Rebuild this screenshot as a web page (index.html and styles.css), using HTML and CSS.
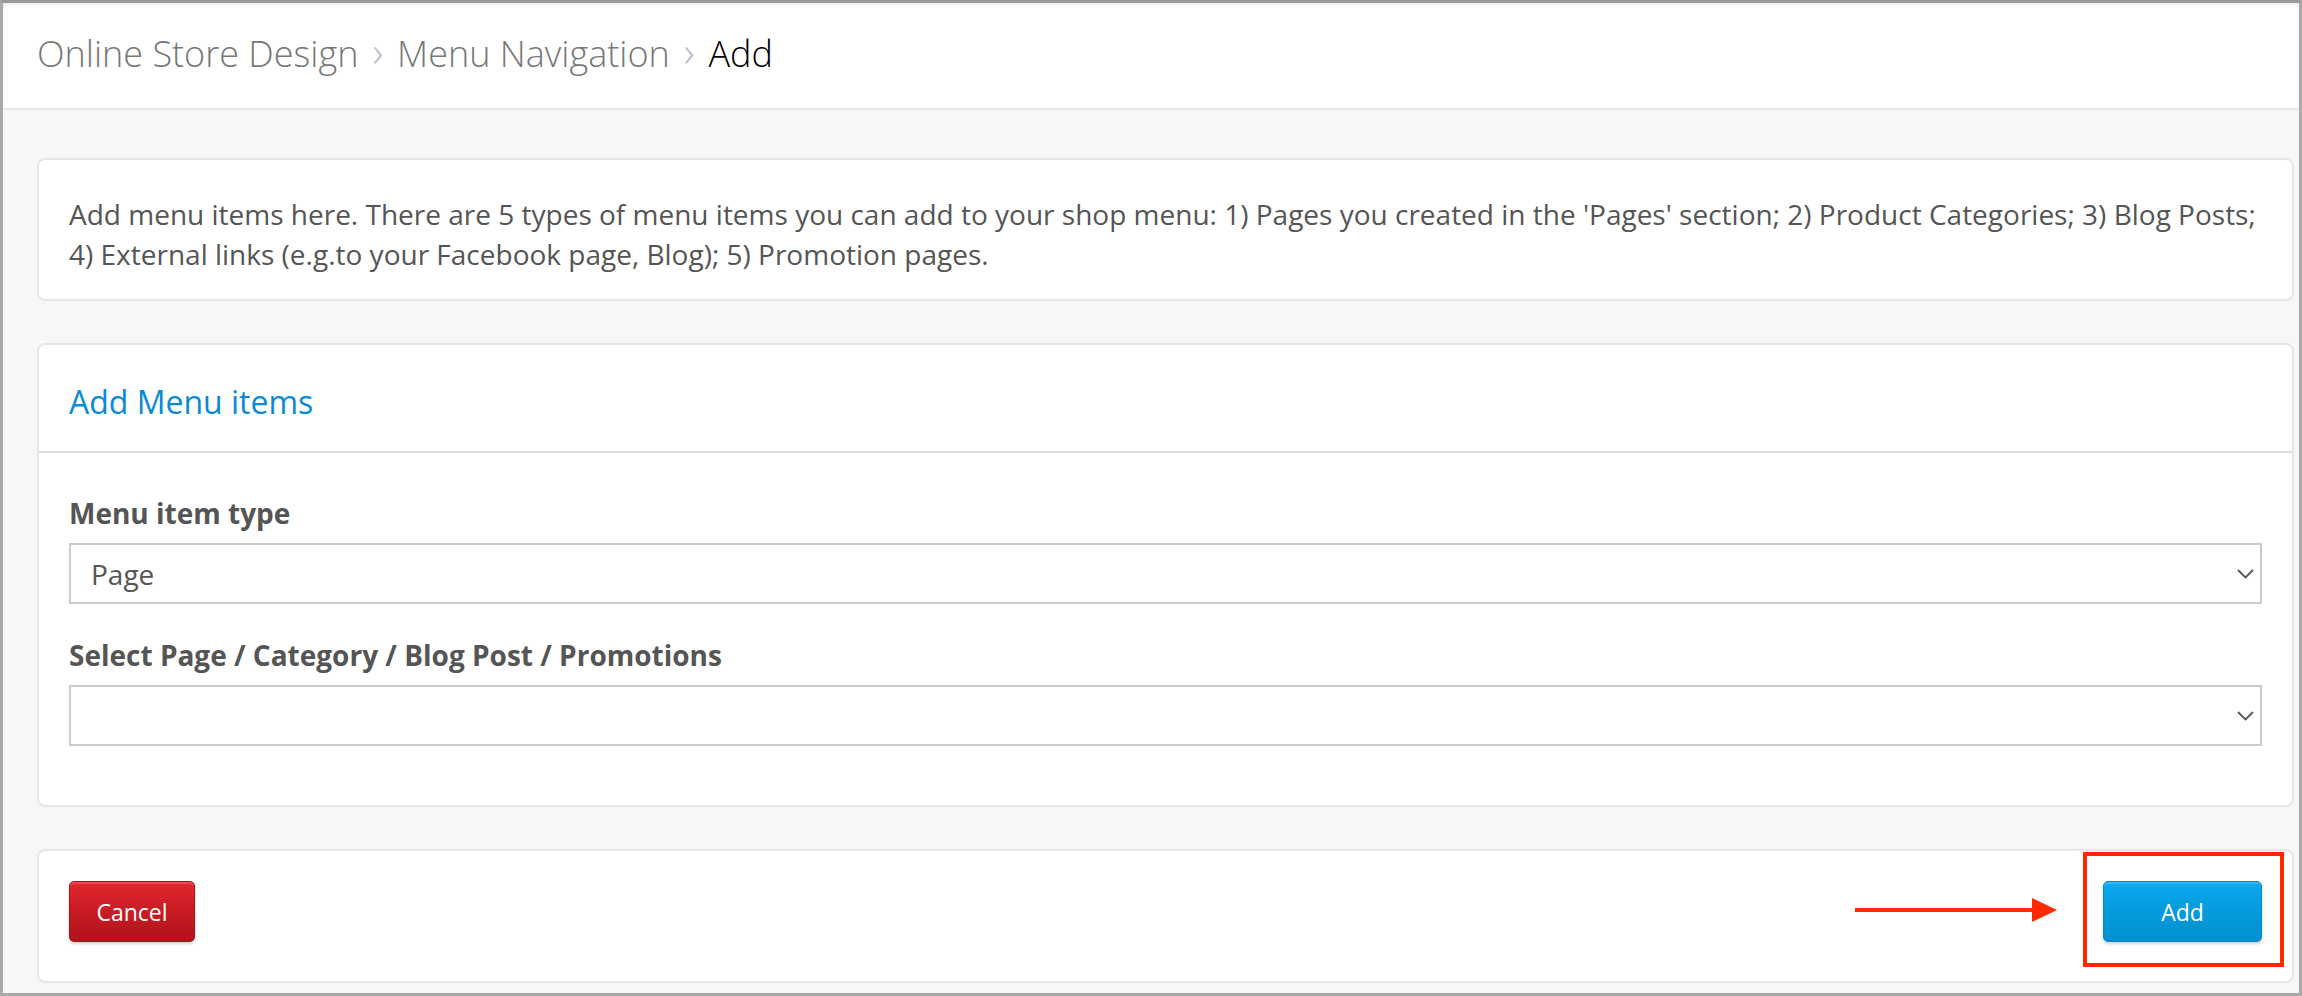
FILE: index.html
```html
<!DOCTYPE html>
<html>
<head>
    <meta charset="utf-8">
    <meta name="viewport" content="width=device-width, initial-scale=1">
    <title>Menu Navigation - Add</title>
    <link rel="stylesheet" href="styles.css">
</head>
<body>
    <div class="window">
        <header class="topbar">
            <nav class="crumbs">
                <span class="crumb">Online Store Design</span>
                <span class="sep">&rsaquo;</span>
                <span class="crumb">Menu Navigation</span>
                <span class="sep">&rsaquo;</span>
                <span class="crumb current">Add</span>
            </nav>
        </header>

        <main class="content">
            <section class="card intro">
                <p>Add menu items here. There are 5 types of menu items you can add to your shop menu: 1) Pages you created in the 'Pages' section; 2) Product Categories; 3) Blog Posts; 4) External links (e.g.to your Facebook page, Blog); 5) Promotion pages.</p>
            </section>

            <section class="card">
                <div class="card-head">
                    <h2>Add Menu items</h2>
                </div>
                <div class="card-body">
                    <div class="field">
                        <label for="item-type">Menu item type</label>
                        <div class="select-wrap">
                            <select id="item-type">
                                <option>Page</option>
                            </select>
                            <svg class="caret" width="17" height="10" viewBox="0 0 17 10"><polyline points="1,1 8.5,8.5 16,1" /></svg>
                        </div>
                    </div>
                    <div class="field">
                        <label for="item-target">Select Page / Category / Blog Post / Promotions</label>
                        <div class="select-wrap">
                            <select id="item-target">
                                <option></option>
                            </select>
                            <svg class="caret" width="17" height="10" viewBox="0 0 17 10"><polyline points="1,1 8.5,8.5 16,1" /></svg>
                        </div>
                    </div>
                </div>
            </section>

            <section class="card actions">
                <button class="btn btn-cancel">Cancel</button>
                <button class="btn btn-add">Add</button>
                <!-- annotation -->
                <svg class="arrow" width="202" height="24" viewBox="0 0 202 24">
                    <rect x="0" y="10" width="180" height="4" />
                    <polygon points="177,0 202,12 177,24" />
                </svg>
                <div class="callout"></div>
            </section>
        </main>
    </div>
</body>
</html>
```

FILE: styles.css
```css
body {
    margin: 0;
    font-family: "Open Sans", "Liberation Sans", sans-serif;
    background-color: #ffffff;
}

.window {
    box-sizing: border-box;
    width: 2302px;
    height: 996px;
    border: 3px solid #a9a9a9;
    border-top-color: #9a9a9a;
    background-color: #f7f7f7;
    overflow: hidden;
}

.topbar {
    box-sizing: border-box;
    height: 107px;
    background-color: white;
    border-bottom: 2px solid #e6e6e6;
    box-shadow: inset 0 3px 4px -2px rgba(0, 0, 0, 0.12);
    display: flex;
    align-items: center;
    padding: 0 34px 5px;
}

.crumbs {
    font-size: 36px;
    font-weight: 300;
    color: #777;
    display: flex;
    align-items: center;
}

.crumbs .sep {
    color: #b4bccb;
    margin: 0 14px;
    font-size: 42px;
    line-height: 36px;
    padding-bottom: 4px;
}

.crumbs .current {
    color: #000;
}

.content {
    padding: 48px 5px 0 34px;
    display: flex;
    flex-direction: column;
    gap: 42px;
}

.card {
    background-color: white;
    border: 2px solid #e6e6e6;
    border-radius: 8px;
}

.intro {
    padding: 34px 30px 25px;
}

.intro p {
    margin: 0;
    font-size: 28px;
    line-height: 40px;
    color: #555;
}

.card-head {
    padding: 35px 30px 27px;
    border-bottom: 2px solid #dedede;
}

.card-head h2 {
    margin: 0;
    font-size: 32px;
    line-height: 44px;
    font-weight: 400;
    color: #0a8ad4;
}

.card-body {
    padding: 40px 30px 28px;
}

.field {
    margin-bottom: 31px;
}

.field label {
    display: block;
    font-size: 28px;
    line-height: 40px;
    font-weight: 700;
    color: #555;
    margin-bottom: 10px;
}

.select-wrap {
    position: relative;
}

.select-wrap select {
    -webkit-appearance: none;
    appearance: none;
    box-sizing: border-box;
    display: block;
    width: 100%;
    height: 61px;
    border: 2px solid #cbcbcb;
    border-radius: 0;
    background-color: white;
    padding: 0 40px 0 20px;
    font-family: "Open Sans", "Liberation Sans", sans-serif;
    font-size: 28px;
    color: #555;
}

.caret {
    position: absolute;
    right: 8px;
    top: 26px;
    pointer-events: none;
}

.caret polyline {
    fill: none;
    stroke: #555;
    stroke-width: 1.8;
}

.actions {
    position: relative;
    padding: 30px 30px 39px;
    display: flex;
    justify-content: space-between;
    align-items: flex-start;
}

.btn {
    box-sizing: border-box;
    height: 61px;
    padding: 0 26px;
    border-radius: 5px;
    font-family: "Open Sans", "Liberation Sans", sans-serif;
    font-size: 23px;
    color: white;
    box-shadow: 0 2px 3px rgba(0, 0, 0, 0.18);
}

.btn-cancel {
    width: 126px;
    border: 1px solid #a5121a;
    background: linear-gradient(#e4272f, #c81c24 50%, #b0131c);
    box-shadow: inset 0 2px 0 rgba(255, 255, 255, 0.18), 0 2px 3px rgba(0, 0, 0, 0.18);
}

.btn-add {
    width: 159px;
    border: 1px solid #0a84c2;
    background: linear-gradient(#0ba9ef, #049bdd 50%, #0090cf);
    box-shadow: inset 0 2px 0 rgba(255, 255, 255, 0.18), 0 2px 3px rgba(0, 0, 0, 0.18);
}

.callout {
    position: absolute;
    right: 8px;
    top: 1px;
    box-sizing: border-box;
    width: 201px;
    height: 115px;
    border: 4px solid #ff2600;
}

.arrow {
    position: absolute;
    right: 235px;
    top: 47px;
    fill: #ff2a00;
}
```
